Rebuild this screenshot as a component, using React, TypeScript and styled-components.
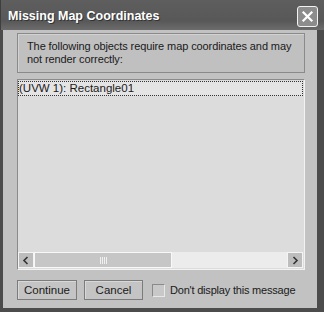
import React from "react";
import styled, { createGlobalStyle } from "styled-components";

const Global = createGlobalStyle`
  html, body { margin: 0; padding: 0; background: #c2c2c2; }
  body { font-family: "Liberation Sans", Arial, sans-serif; }
`;

const Window = styled.div`
  width: 324px;
  height: 312px;
  box-sizing: border-box;
  background: #4c4c4c;
  display: flex;
  flex-direction: column;
  overflow: hidden;
`;

const TitleBar = styled.div`
  height: 30px;
  flex: none;
  display: flex;
  align-items: center;
  justify-content: space-between;
  padding: 0 7px 0 7px;
  background: linear-gradient(#5e5e5e 0%, #585858 70%, #6c6c6c 100%);
  border-left: 1px solid #3e3e3e;
  box-sizing: border-box;
`;

const Title = styled.div`
  color: #ffffff;
  font-family: "Liberation Sans", Arial, sans-serif;
  font-weight: bold;
  font-size: 12.5px;
  text-shadow: 1px 1px 0 #333;
  margin-top: 1px;
`;

const CloseButton = styled.div`
  width: 19px;
  height: 19px;
  border: 1px solid #f2f2f2;
  border-radius: 3px;
  background: #8c8c8c;
  display: flex;
  align-items: center;
  justify-content: center;
  margin-top: 2px;
  margin-right: -1px;
`;

const Body = styled.div`
  flex: 1;
  margin: 0 7px 4px 3px;
  background: #c2c2c2;
  padding: 3px 12px 0 14px;
  display: flex;
  flex-direction: column;
`;

const MessageBox = styled.div`
  height: 40px;
  box-sizing: border-box;
  border: 1px solid #8a8a8a;
  box-shadow: inset 1px 1px 0 #d2d2d2;
  padding: 6px 9px 0 9px;
  font-size: 11px;
  line-height: 13px;
  letter-spacing: -0.1px;
  color: #1a1a1a;
  background: #c0c0c0;
  white-space: nowrap;
`;

const ListBox = styled.div`
  margin-top: 6px;
  height: 191px;
  box-sizing: border-box;
  border: 1px solid #8a8a8a;
  border-right-color: #f2f2f2;
  border-bottom-color: #f2f2f2;
  background: #dcdcdc;
  display: flex;
  flex-direction: column;
`;

const ListItems = styled.div`
  flex: 1;
  padding: 1px 1px 0 0;
`;

const ListItem = styled.div`
  height: 13px;
  border: 1px dotted #333;
  background: #e4e4e4;
  font-size: 11.5px;
  line-height: 13px;
  color: #1a1a1a;
  white-space: nowrap;
`;

const ScrollBar = styled.div`
  height: 16px;
  display: flex;
  background: #ececec;
  margin: 0 1px 1px 0;
`;

const ScrollButton = styled.div`
  width: 16px;
  height: 16px;
  box-sizing: border-box;
  border: 1px solid #f4f4f4;
  background: #bdbdbd;
  display: flex;
  align-items: center;
  justify-content: center;
`;

const Track = styled.div`
  flex: 1;
  display: flex;
`;

const Thumb = styled.div`
  width: 138px;
  box-sizing: border-box;
  border: 1px solid #f8f8f8;
  background: #c6c6c6;
  display: flex;
  align-items: center;
  justify-content: center;
  gap: 1px;
`;

const Grip = styled.span`
  width: 1px;
  height: 7px;
  background: #f0f0f0;
`;

const Footer = styled.div`
  margin-top: 10px;
  display: flex;
  align-items: center;
  white-space: nowrap;
`;

const Button = styled.div<{ $w: number }>`
  width: ${(p) => p.$w}px;
  height: 20px;
  flex: none;
  box-sizing: border-box;
  border: 1px solid #7c7c7c;
  box-shadow: inset 1px 1px 0 #d8d8d8;
  background: #c4c4c4;
  display: flex;
  align-items: center;
  justify-content: center;
  font-size: 11.5px;
  color: #1a1a1a;
  margin-right: 7px;
`;

const CheckRow = styled.label`
  display: flex;
  align-items: center;
  margin-left: 2px;
  font-size: 11px;
  letter-spacing: -0.2px;
  color: #1a1a1a;
`;

const CheckBox = styled.span`
  width: 13px;
  height: 13px;
  flex: none;
  box-sizing: border-box;
  border: 1px solid #8a8a8a;
  border-right-color: #e8e8e8;
  border-bottom-color: #e8e8e8;
  background: #c8c8c8;
  margin-right: 5px;
`;

export default function App() {
  return (
    <>
      <Global />
      <Window>
        <TitleBar>
          <Title>Missing Map Coordinates</Title>
          <CloseButton>
            <svg width="13" height="13" viewBox="0 0 13 13">
              <path d="M2.5 2.5 L10.5 10.5 M10.5 2.5 L2.5 10.5" stroke="#fff" strokeWidth="2.2" strokeLinecap="square" />
            </svg>
          </CloseButton>
        </TitleBar>
        <Body>
          <MessageBox>
            The following objects require map coordinates and may
            <br />
            not render correctly:
          </MessageBox>
          <ListBox>
            <ListItems>
              <ListItem>(UVW 1): Rectangle01</ListItem>
            </ListItems>
            <ScrollBar>
              <ScrollButton>
                <svg width="8" height="9" viewBox="0 0 8 9">
                  <path d="M5.5 1 L2 4.5 L5.5 8" stroke="#333" strokeWidth="1.6" fill="none" />
                </svg>
              </ScrollButton>
              <Track>
                <Thumb>
                  <Grip />
                  <Grip />
                  <Grip />
                  <Grip />
                </Thumb>
              </Track>
              <ScrollButton>
                <svg width="8" height="9" viewBox="0 0 8 9">
                  <path d="M2.5 1 L6 4.5 L2.5 8" stroke="#333" strokeWidth="1.6" fill="none" />
                </svg>
              </ScrollButton>
            </ScrollBar>
          </ListBox>
          <Footer>
            <Button $w={60}>Continue</Button>
            <Button $w={59}>Cancel</Button>
            <CheckRow>
              <CheckBox />
              Don't display this message
            </CheckRow>
          </Footer>
        </Body>
      </Window>
    </>
  );
}
